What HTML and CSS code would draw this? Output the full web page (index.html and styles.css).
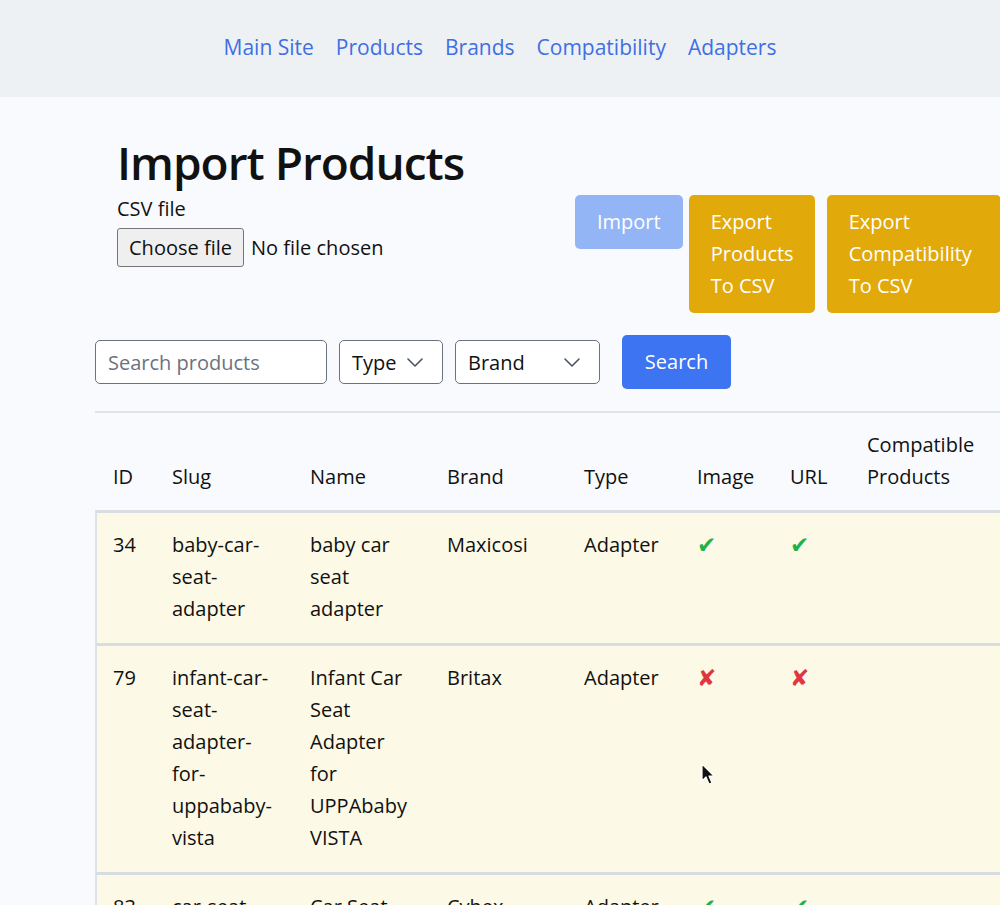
FILE: index.html
```html
<!DOCTYPE html>
<html lang="en">
<head>
<meta charset="utf-8">
<title>Import Products</title>
<link rel="stylesheet" href="styles.css">
</head>
<body>
<nav class="topnav">
  <a href="#">Main Site</a>
  <a href="#">Products</a>
  <a href="#">Brands</a>
  <a href="#">Compatibility</a>
  <a href="#">Adapters</a>
</nav>
<main class="page">
  <section class="import">
    <h1 class="title">Import Products</h1>
    <div class="import-row">
      <form class="import-form">
        <div class="file-field">
          <span class="file-label">CSV file</span>
          <div class="file-picker">
            <input class="file-input" id="csv" type="file">
            <label class="file-button" for="csv">Choose file</label>
            <span class="file-status">No file chosen</span>
          </div>
        </div>
        <button class="btn btn-import" type="submit" disabled>Import</button>
      </form>
      <button class="btn btn-export btn-export-products" type="button">Export Products To CSV</button>
      <button class="btn btn-export btn-export-compat" type="button">Export Compatibility To CSV</button>
    </div>
  </section>

  <form class="filters">
    <input class="search-input" type="text" placeholder="Search products">
    <span class="select-wrap select-type">
      <select class="select"><option>Type</option></select>
      <svg class="chevron" viewBox="0 0 16 9" width="16" height="9"><path d="M1 1l7 7 7-7" fill="none" stroke="#4b5563" stroke-width="1.6" stroke-linecap="round" stroke-linejoin="round"/></svg>
    </span>
    <span class="select-wrap select-brand">
      <select class="select"><option>Brand</option></select>
      <svg class="chevron" viewBox="0 0 16 9" width="16" height="9"><path d="M1 1l7 7 7-7" fill="none" stroke="#4b5563" stroke-width="1.6" stroke-linecap="round" stroke-linejoin="round"/></svg>
    </span>
    <button class="btn btn-search" type="submit">Search</button>
  </form>

  <table class="products">
    <colgroup>
      <col class="c-id"><col class="c-slug"><col class="c-name"><col class="c-brand"><col class="c-type"><col class="c-image"><col class="c-url"><col class="c-compat">
    </colgroup>
    <thead>
      <tr>
        <th>ID</th><th>Slug</th><th>Name</th><th>Brand</th><th>Type</th><th>Image</th><th>URL</th><th>Compatible Products</th>
      </tr>
    </thead>
    <tbody>
      <tr>
        <td>34</td><td>baby-car-seat-adapter</td><td>baby car seat adapter</td><td>Maxicosi</td><td>Adapter</td>
        <td><span class="yes">✔</span></td><td><span class="yes">✔</span></td><td></td>
      </tr>
      <tr>
        <td>79</td><td>infant-car-seat-adapter-for-uppababy-vista</td><td>Infant Car Seat Adapter for UPPAbaby VISTA</td><td>Britax</td><td>Adapter</td>
        <td><span class="no">✘</span></td><td><span class="no">✘</span></td><td></td>
      </tr>
      <tr>
        <td>83</td><td>car-seat-adapter-for-cybex</td><td>Car Seat Adapter for Cybex</td><td>Cybex</td><td>Adapter</td>
        <td><span class="yes">✔</span></td><td><span class="yes">✔</span></td><td></td>
      </tr>
    </tbody>
  </table>
</main>
<svg class="cursor" width="14" height="22" viewBox="0 0 14 22"><path d="M1 1v17l4-4 3 7 3-1-3-7h5z" fill="#111" stroke="#fff" stroke-width="1.2" stroke-linejoin="round"/></svg>
</body>
</html>
```
FILE: styles.css
```css
html {
  overflow: hidden;
}

body {
  margin: 0;
  background: #f8fafd;
  font-family: "Open Sans", "Liberation Sans", sans-serif;
  font-size: 20px;
  color: #111;
  position: relative;
}

.topnav {
  height: 97px;
  box-sizing: border-box;
  padding-bottom: 4px;
  background: #eef1f4;
  display: flex;
  justify-content: center;
  align-items: center;
  gap: 22px;
}

.topnav a {
  color: #3f6fe3;
  text-decoration: none;
  font-size: 21px;
}

.page {
  padding-left: 95px;
}

.import {
  padding-left: 22px;
}

.title {
  margin: 0;
  padding-top: 35px;
  font-size: 46px;
  line-height: 60px;
  font-weight: 600;
  letter-spacing: -1px;
}

.import-row {
  display: flex;
  align-items: flex-start;
  padding-top: 3px;
}

.import-form {
  display: flex;
  align-items: flex-start;
}

.file-field {
  width: 458px;
  display: flex;
  flex-direction: column;
  align-items: flex-start;
  margin-top: -2px;
}

.file-label {
  line-height: 32px;
}

.file-picker {
  display: flex;
  align-items: center;
  margin-top: 3px;
}

.file-input {
  position: absolute;
  width: 1px;
  height: 1px;
  opacity: 0;
  overflow: hidden;
}

.file-button {
  box-sizing: border-box;
  height: 39px;
  width: 127px;
  display: flex;
  align-items: center;
  justify-content: center;
  background: #efefef;
  border: 1px solid #767676;
  border-radius: 3px;
  color: #111;
}

.file-status {
  margin-left: 7px;
}

.btn {
  border: none;
  border-radius: 5px;
  color: #fff;
  font-family: inherit;
  font-size: 20px;
  line-height: 32px;
  padding: 11px 22px;
  text-align: left;
  flex-shrink: 0;
}

.btn-import {
  background: #93b5f6;
}

.btn-export {
  background: #e2a90b;
}

.btn-export-products {
  width: 126px;
  margin-left: 6px;
}

.btn-export-compat {
  width: 174px;
  margin-left: 12px;
}

.filters {
  display: flex;
  align-items: center;
  margin-top: 22px;
  gap: 12px;
}

.search-input {
  box-sizing: border-box;
  width: 232px;
  height: 44px;
  padding: 0 12px;
  border: 1px solid #6b7280;
  border-radius: 5px;
  background: #fff;
  font-family: inherit;
  font-size: 20px;
  color: #111;
}

.search-input::placeholder {
  color: #6b7280;
}

.select-wrap {
  position: relative;
  display: block;
}

.select-type {
  width: 104px;
}

.select-brand {
  width: 145px;
}

.select {
  box-sizing: border-box;
  width: 100%;
  height: 44px;
  padding: 0 12px;
  appearance: none;
  -webkit-appearance: none;
  border: 1px solid #6b7280;
  border-radius: 5px;
  background: #fff;
  font-family: inherit;
  font-size: 20px;
  color: #111;
}

.chevron {
  position: absolute;
  right: 20px;
  top: 18px;
  pointer-events: none;
}

.btn-search {
  margin-left: 10px;
  width: 109px;
  height: 54px;
  padding: 0;
  text-align: center;
  background: #3c74f1;
}

.products {
  margin-top: 22px;
  border-collapse: separate;
  border-spacing: 0;
  table-layout: fixed;
  width: 936px;
}

.c-id { width: 61px; }
.c-slug { width: 138px; }
.c-name { width: 137px; }
.c-brand { width: 137px; }
.c-type { width: 113px; }
.c-image { width: 93px; }
.c-url { width: 77px; }
.c-compat { width: 180px; }

.products th,
.products td {
  text-align: left;
  line-height: 32px;
  padding-left: 16px;
  padding-right: 16px;
}

.products th {
  vertical-align: bottom;
  font-weight: 500;
  padding-top: 16px;
  padding-bottom: 17px;
  border-top: 2px solid #e1e5ea;
}

.products td {
  vertical-align: top;
  background: #fcf9e7;
  padding-top: 16px;
  padding-bottom: 18px;
  border-top: 3px solid #d8dde4;
}

.products th:first-child {
  padding-left: 18px;
}

.products td:first-child {
  border-left: 2px solid #dde2e8;
}

.yes,
.no {
  font-family: "DejaVu Sans", sans-serif;
  font-size: 23px;
}

.yes {
  color: #22b04b;
}

.no {
  color: #e0363f;
}

.cursor {
  position: absolute;
  left: 701px;
  top: 763px;
}
```
